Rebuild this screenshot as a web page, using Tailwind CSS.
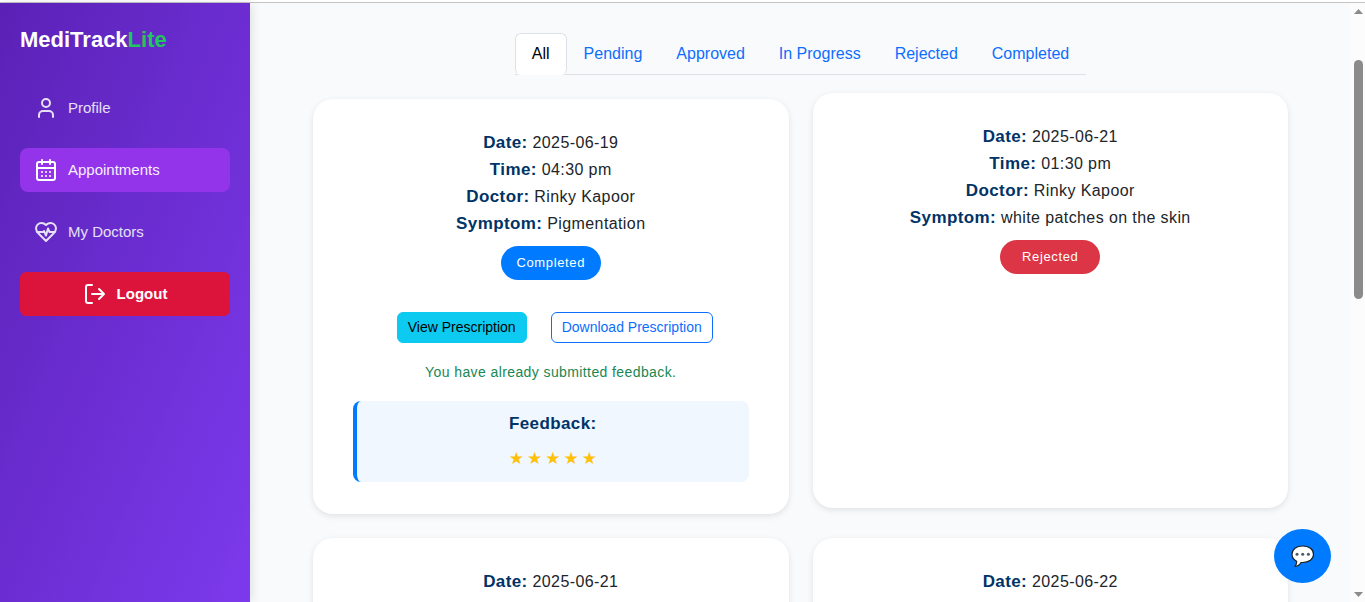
<!DOCTYPE html>
<html lang="en">
<head>
<meta charset="utf-8">
<meta name="viewport" content="width=device-width, initial-scale=1">
<title>MediTrackLite</title>
<script src="https://cdn.jsdelivr.net/npm/@tailwindcss/browser@4"></script>
</head>
<body class="relative flex h-screen flex-col overflow-hidden bg-[#f9fafc] font-['Liberation_Sans',Arial,sans-serif] text-base text-[#212529]">
<div class="h-[3px] shrink-0 border-b border-[#c4c4c4] bg-white"></div>
<div class="flex min-h-0 flex-1">
  <aside class="z-10 w-[250px] shrink-0 bg-[linear-gradient(to_bottom_right,#5b21b6,#7c3aed)] px-5 pt-5 shadow-[2px_0_10px_rgba(0,0,0,0.1)]">
    <h1 class="text-[22px] leading-[34px] font-bold text-white">MediTrack<span class="text-[#22c55e]">Lite</span></h1>
    <nav class="mt-[29px] flex flex-col gap-[18px] text-[15px] text-[#e5e0f5]">
      <a href="#profile" class="flex h-11 items-center gap-2.5 rounded-lg px-3.5">
        <svg class="size-6" viewBox="0 0 24 24" fill="none" stroke="currentColor" stroke-width="2" stroke-linecap="round" stroke-linejoin="round"><path d="M19 21v-2a4 4 0 0 0-4-4H9a4 4 0 0 0-4 4v2"/><circle cx="12" cy="7" r="4"/></svg>
        Profile</a>
      <a href="#appointments" class="flex h-11 items-center gap-2.5 rounded-lg bg-[#9333ea] px-3.5 text-[#f6f0fd]">
        <svg class="size-6 text-white" viewBox="0 0 24 24" fill="none" stroke="currentColor" stroke-width="2" stroke-linecap="round" stroke-linejoin="round"><path d="M8 2v4M16 2v4"/><rect width="18" height="18" x="3" y="4" rx="2"/><path d="M3 10h18M8 14h.01M12 14h.01M16 14h.01M8 18h.01M12 18h.01M16 18h.01"/></svg>
        Appointments</a>
      <a href="#doctors" class="flex h-11 items-center gap-2.5 rounded-lg px-3.5">
        <svg class="size-6" viewBox="0 0 24 24" fill="none" stroke="currentColor" stroke-width="2" stroke-linecap="round" stroke-linejoin="round"><path d="M19 14c1.49-1.46 3-3.21 3-5.5A5.5 5.5 0 0 0 16.5 3c-1.76 0-3 .5-4.5 2-1.5-1.5-2.74-2-4.5-2A5.5 5.5 0 0 0 2 8.5c0 2.3 1.5 4.05 3 5.5l7 7Z"/><path d="M3.22 12H9.5l.5-1 2 4.5 2-7 1.5 3.5h5.27"/></svg>
        My Doctors</a>
      <button type="button" class="flex h-11 items-center justify-center gap-2.5 rounded-md bg-[#dc143c] font-bold text-white">
        <svg class="size-6" viewBox="0 0 24 24" fill="none" stroke="currentColor" stroke-width="2" stroke-linecap="round" stroke-linejoin="round"><path d="M9 21H5a2 2 0 0 1-2-2V5a2 2 0 0 1 2-2h4M16 17l5-5-5-5M21 12H9"/></svg>
        Logout</button>
    </nav>
  </aside>

  <main class="min-w-0 flex-1 overflow-hidden pt-[30px] pr-6 pl-[25px]">
    <div role="tablist" class="mx-auto flex w-fit border-b border-[#dee2e6] text-[#0d6efd]">
      <button type="button" role="tab" aria-selected="true" class="-mb-px h-[42px] rounded-md border border-[#dee2e6] border-b-white bg-white px-4 text-black">All</button>
      <button type="button" role="tab" class="h-[41px] px-[17px]">Pending</button>
      <button type="button" role="tab" class="h-[41px] px-[17px]">Approved</button>
      <button type="button" role="tab" class="h-[41px] px-[17px]">In Progress</button>
      <button type="button" role="tab" class="h-[41px] px-[17px]">Rejected</button>
      <button type="button" role="tab" class="h-[41px] px-[17px]">Completed</button>
    </div>

    <div class="mx-auto mt-6 grid max-w-[975px] grid-cols-2 gap-6 text-center leading-[27px] tracking-wide">
      <article class="rounded-[20px] bg-white px-10 pt-[30px] pb-8 shadow-[0_2px_6px_rgba(0,0,0,0.1)]">
        <p><strong class="text-[17px] text-[#003366]">Date:</strong> 2025-06-19</p>
        <p><strong class="text-[17px] text-[#003366]">Time:</strong> 04:30 pm</p>
        <p><strong class="text-[17px] text-[#003366]">Doctor:</strong> Rinky Kapoor</p>
        <p><strong class="text-[17px] text-[#003366]">Symptom:</strong> Pigmentation</p>
        <span class="mx-auto mt-[9px] flex h-[34px] w-[100px] items-center justify-center rounded-full bg-[#007bff] pb-0.5 text-[13px] tracking-wider text-white">Completed</span>
        <div class="mt-8 flex justify-center gap-6 pl-2 text-sm tracking-normal">
          <button type="button" class="h-[31px] rounded-md border border-[#0dcaf0] bg-[#0dcaf0] px-2.5 pb-0.5 text-black">View Prescription</button>
          <button type="button" class="h-[31px] rounded-md border border-[#0d6efd] px-2.5 pb-0.5 text-[#0d6efd]">Download Prescription</button>
        </div>
        <p class="mt-[18px] text-sm leading-[22px] text-[#198754]">You have already submitted feedback.</p>
        <section class="mt-[18px] rounded-lg border-l-4 border-[#007bff] bg-[#f0f7ff] pt-[9px] pb-[10px]">
          <h2 class="text-[17px] font-bold text-[#003366]">Feedback:</h2>
          <p class="mt-2 flex justify-center gap-[3px] font-['DejaVu_Sans',sans-serif] text-[17px] tracking-normal text-[#ffc107]" role="img" aria-label="5 out of 5 stars"><span>★</span><span>★</span><span>★</span><span>★</span><span>★</span></p>
        </section>
      </article>
      <article class="-translate-y-1.5 rounded-[20px] bg-white px-10 pt-[30px] pb-8 shadow-[0_2px_6px_rgba(0,0,0,0.1)]">
        <p><strong class="text-[17px] text-[#003366]">Date:</strong> 2025-06-21</p>
        <p><strong class="text-[17px] text-[#003366]">Time:</strong> 01:30 pm</p>
        <p><strong class="text-[17px] text-[#003366]">Doctor:</strong> Rinky Kapoor</p>
        <p><strong class="text-[17px] text-[#003366]">Symptom:</strong> white patches on the skin</p>
        <span class="mx-auto mt-[9px] flex h-[34px] w-[100px] items-center justify-center rounded-full bg-[#dc3545] pb-0.5 text-[13px] tracking-wider text-white">Rejected</span>
      </article>
      <article class="rounded-[20px] bg-white px-10 pt-[30px] pb-8 shadow-[0_2px_6px_rgba(0,0,0,0.1)]">
        <p><strong class="text-[17px] text-[#003366]">Date:</strong> 2025-06-21</p>
      </article>
      <article class="rounded-[20px] bg-white px-10 pt-[30px] pb-8 shadow-[0_2px_6px_rgba(0,0,0,0.1)]">
        <p><strong class="text-[17px] text-[#003366]">Date:</strong> 2025-06-22</p>
      </article>
    </div>
  </main>

  <div class="flex w-[15px] shrink-0 flex-col items-end bg-[#fcfcfc] pt-1.5 pr-0.5 pb-[5px]" aria-hidden="true">
    <svg class="h-[5px] w-[9px]" viewBox="0 0 9 5" fill="#8b8b8b"><path d="M0 5 4.5 0 9 5z"/></svg>
    <div class="mt-[46px] h-[239px] w-[9px] rounded-full bg-[#8b8b8b]"></div>
    <svg class="mt-auto h-[5px] w-[9px]" viewBox="0 0 9 5" fill="#8b8b8b"><path d="M0 0h9L4.5 5z"/></svg>
  </div>
</div>

<button type="button" aria-label="Open chat" class="absolute right-[34px] bottom-[19px] z-20 flex h-[54px] w-[57px] items-center justify-center rounded-[50%] bg-[#007bff]">
  <svg class="h-6 w-6" viewBox="0 0 24 24"><path d="M11.500 2C5.500 2 1 5.400 1 10.300c0 3.300 1.800 5.700 4.700 7.100.1 1.900-.6 3.600-1.700 4.900 3-.2 5-1.800 6-3.800h1.500c6.500 0 11-3.300 11-8.200S18 2 11.500 2Z" fill="#fff" stroke="#1b2023" stroke-width="1.200" stroke-linejoin="round"/><g fill="#4b5a66"><circle cx="6" cy="10.300" r="1.500"/><circle cx="11.700" cy="10.300" r="1.500"/><circle cx="17.400" cy="10.300" r="1.500"/></g></svg>
</button>
</body>
</html>
